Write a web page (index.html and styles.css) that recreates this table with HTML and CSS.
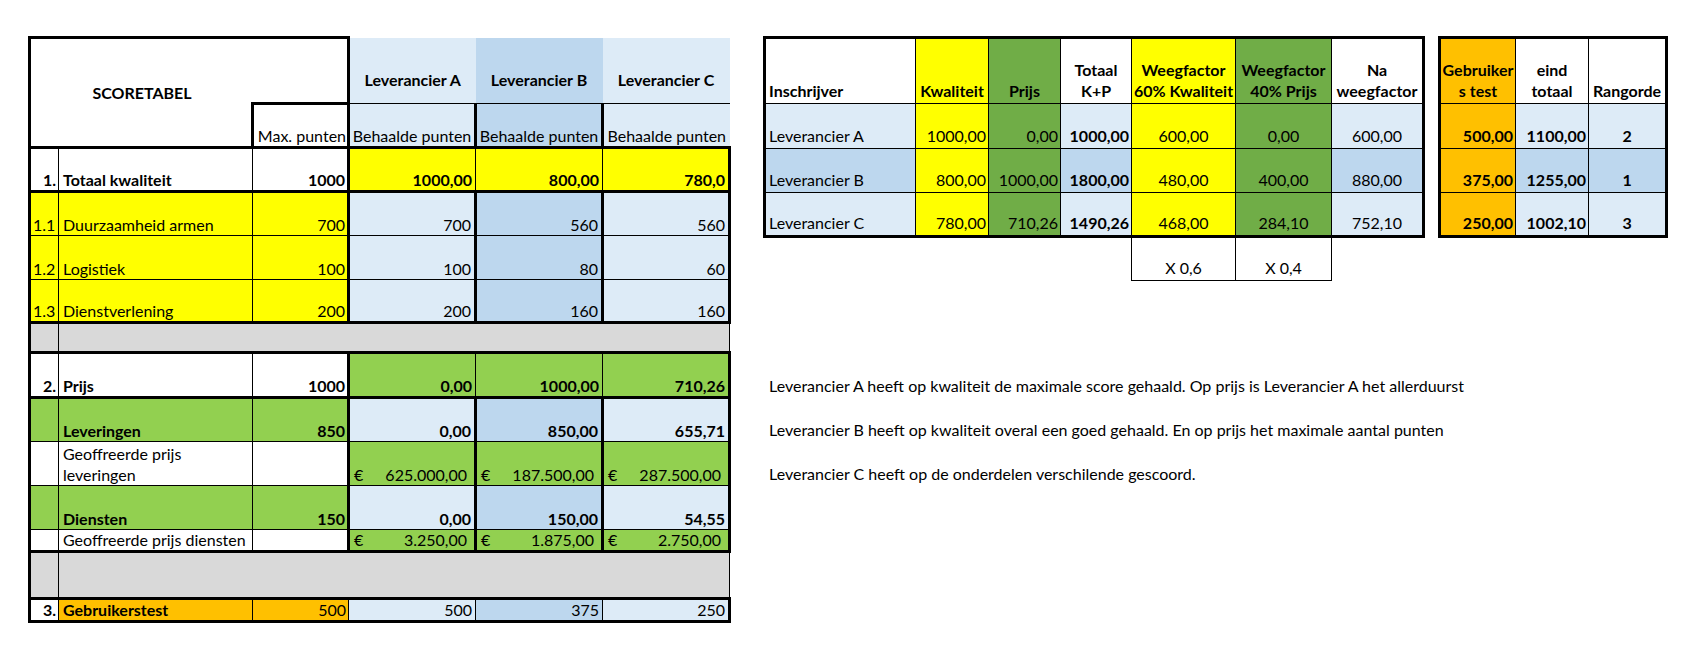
FILE: index.html
```html
<!DOCTYPE html>
<html lang="nl">
<head>
<meta charset="utf-8">
<title>Scoretabel</title>
<link rel="stylesheet" href="styles.css">
</head>
<body>
<div class="page">
  <table class="score">
    <colgroup>
      <col class="w-nr"><col class="w-label"><col class="w-max"><col class="w-lev"><col class="w-lev"><col class="w-lev">
    </colgroup>
    <tr class="h1">
      <td class="title" colspan="2" rowspan="2">SCORETABEL</td>
      <td class="m"></td>
      <td class="a">Leverancier A</td>
      <td class="b">Leverancier B</td>
      <td class="c">Leverancier C</td>
    </tr>
    <tr class="h2">
      <td class="m">Max. punten</td>
      <td class="a">Behaalde punten</td>
      <td class="b">Behaalde punten</td>
      <td class="c">Behaalde punten</td>
    </tr>
    <tr class="tot kw r44">
      <td class="n">1.</td>
      <td class="l">Totaal kwaliteit</td>
      <td class="m">1000</td>
      <td class="a">1000,00</td>
      <td class="b">800,00</td>
      <td class="c">780,0</td>
    </tr>
    <tr class="sub r44">
      <td class="n">1.1</td>
      <td class="l">Duurzaamheid armen</td>
      <td class="m">700</td>
      <td class="a">700</td>
      <td class="b">560</td>
      <td class="c">560</td>
    </tr>
    <tr class="sub r44">
      <td class="n">1.2</td>
      <td class="l">Logistiek</td>
      <td class="m">100</td>
      <td class="a">100</td>
      <td class="b">80</td>
      <td class="c">60</td>
    </tr>
    <tr class="sub last r43">
      <td class="n">1.3</td>
      <td class="l">Dienstverlening</td>
      <td class="m">200</td>
      <td class="a">200</td>
      <td class="b">160</td>
      <td class="c">160</td>
    </tr>
    <tr class="gap r30">
      <td class="n"></td>
      <td class="span" colspan="5"></td>
    </tr>
    <tr class="tot pr r45">
      <td class="n">2.</td>
      <td class="l">Prijs</td>
      <td class="m">1000</td>
      <td class="a">0,00</td>
      <td class="b">1000,00</td>
      <td class="c">710,26</td>
    </tr>
    <tr class="grp r44">
      <td class="n"></td>
      <td class="l">Leveringen</td>
      <td class="m">850</td>
      <td class="a">0,00</td>
      <td class="b">850,00</td>
      <td class="c">655,71</td>
    </tr>
    <tr class="off r44">
      <td class="n"></td>
      <td class="l wrap">Geoffreerde prijs<br>leveringen</td>
      <td class="m"></td>
      <td class="a"><span class="cur">€</span>625.000,00</td>
      <td class="b"><span class="cur">€</span>187.500,00</td>
      <td class="c"><span class="cur">€</span>287.500,00</td>
    </tr>
    <tr class="grp r44">
      <td class="n"></td>
      <td class="l">Diensten</td>
      <td class="m">150</td>
      <td class="a">0,00</td>
      <td class="b">150,00</td>
      <td class="c">54,55</td>
    </tr>
    <tr class="off last r22">
      <td class="n"></td>
      <td class="l">Geoffreerde prijs diensten</td>
      <td class="m"></td>
      <td class="a"><span class="cur">€</span>3.250,00</td>
      <td class="b"><span class="cur">€</span>1.875,00</td>
      <td class="c"><span class="cur">€</span>2.750,00</td>
    </tr>
    <tr class="gap r47">
      <td class="n"></td>
      <td class="span" colspan="5"></td>
    </tr>
    <tr class="geb r23">
      <td class="n">3.</td>
      <td class="l">Gebruikerstest</td>
      <td class="m">500</td>
      <td class="a">500</td>
      <td class="b">375</td>
      <td class="c">250</td>
    </tr>
  </table>

  <div class="right">
    <div class="tables">
      <table class="weeg">
        <colgroup>
          <col class="w-ins"><col class="w-kw"><col class="w-pr"><col class="w-tot"><col class="w-w6"><col class="w-w4"><col class="w-na">
        </colgroup>
        <tr class="hd">
          <td class="ins">Inschrijver</td>
          <td class="kw">Kwaliteit</td>
          <td class="pr">Prijs</td>
          <td class="tot">Totaal<br>K+P</td>
          <td class="w6">Weegfactor<br>60% Kwaliteit</td>
          <td class="w4">Weegfactor<br>40% Prijs</td>
          <td class="na">Na<br>weegfactor</td>
        </tr>
        <tr class="row light r45">
          <td class="ins">Leverancier A</td>
          <td class="kw">1000,00</td>
          <td class="pr">0,00</td>
          <td class="tot">1000,00</td>
          <td class="w6">600,00</td>
          <td class="w4">0,00</td>
          <td class="na">600,00</td>
        </tr>
        <tr class="row mid r44">
          <td class="ins">Leverancier B</td>
          <td class="kw">800,00</td>
          <td class="pr">1000,00</td>
          <td class="tot">1800,00</td>
          <td class="w6">480,00</td>
          <td class="w4">400,00</td>
          <td class="na">880,00</td>
        </tr>
        <tr class="row light last r44">
          <td class="ins">Leverancier C</td>
          <td class="kw">780,00</td>
          <td class="pr">710,26</td>
          <td class="tot">1490,26</td>
          <td class="w6">468,00</td>
          <td class="w4">284,10</td>
          <td class="na">752,10</td>
        </tr>
        <tr class="factor r44">
          <td></td><td></td><td></td><td></td>
          <td class="w6">X 0,6</td>
          <td class="w4">X 0,4</td>
          <td></td>
        </tr>
      </table>

      <table class="eind">
        <colgroup>
          <col class="w-gb"><col class="w-et"><col class="w-rg">
        </colgroup>
        <tr class="hd">
          <td class="gb">Gebruiker<br>s test</td>
          <td class="et">eind<br>totaal</td>
          <td class="rg">Rangorde</td>
        </tr>
        <tr class="row light r45">
          <td class="gb">500,00</td>
          <td class="et">1100,00</td>
          <td class="rg">2</td>
        </tr>
        <tr class="row mid r44">
          <td class="gb">375,00</td>
          <td class="et">1255,00</td>
          <td class="rg">1</td>
        </tr>
        <tr class="row light last r44">
          <td class="gb">250,00</td>
          <td class="et">1002,10</td>
          <td class="rg">3</td>
        </tr>
      </table>
    </div>

    <div class="notes">
      <p class="note n1">Leverancier A heeft op kwaliteit de maximale score gehaald. Op prijs is Leverancier A het allerduurst</p>
      <p class="note">Leverancier B heeft op kwaliteit overal een goed gehaald. En op prijs het maximale aantal punten</p>
      <p class="note">Leverancier C heeft op de onderdelen verschilende gescoord.</p>
    </div>
  </div>
</div>
</body>
</html>
```

FILE: styles.css
```css
:root {
  --thick: 3px solid #000;
  --thin: 1px solid #000;
  --yellow: #ffff00;
  --lblue: #ddebf7;
  --mblue: #bdd7ee;
  --lgreen: #92d050;
  --dgreen: #70ad47;
  --orange: #ffc000;
  --gray: #d9d9d9;
}

body {
  margin: 0;
  background: #fff;
  color: #000;
  font-family: Lato, "Liberation Sans", sans-serif;
  font-size: 16px;
}

.page {
  display: flex;
  align-items: flex-start;
  gap: 32px;
  padding: 36px 0 0 28px;
}

table {
  border-collapse: collapse;
  table-layout: fixed;
}

td {
  padding: 0 3px 1px;
  vertical-align: bottom;
  white-space: nowrap;
  line-height: 19px;
}

/* row heights */
.h1 { height: 66px; }
.h2 { height: 44px; }
.r22 { height: 22px; }
.r23 { height: 23px; }
.r30 { height: 30px; }
.r43 { height: 43px; }
.r44 { height: 44px; }
.r45 { height: 45px; }
.r47 { height: 47px; }

/* ---------- score table ---------- */
.score { width: 702px; }
.w-nr { width: 29px; }
.w-label { width: 194px; }
.w-max { width: 96px; }
.w-lev { width: 127px; }

.score .n { text-align: right; border-left: var(--thick); border-right: var(--thin); padding-right: 2px; }
.score .l { text-align: left; padding-left: 4px; border-right: var(--thin); }
.score .m { text-align: right; padding-right: 2px; }
.score .a, .score .b, .score .c { text-align: right; padding-right: 3px; }
.score .a, .score .c { background: var(--lblue); }
.score .b { background: var(--mblue); }

/* header */
.score .title {
  border-top: var(--thick);
  border-left: var(--thick);
  border-bottom: var(--thick);
  text-align: center;
  vertical-align: middle;
  font-weight: bold;
  padding: 0 0 0 2px;
}
.h1 .m { border-top: var(--thick); border-bottom: var(--thick); border-right: var(--thick); }
.h1 .a, .h1 .b, .h1 .c {
  text-align: center;
  font-weight: bold;
  padding: 0 0 14px;
}
.h2 .m {
  border-left: var(--thick);
  border-right: var(--thick);
  border-bottom: var(--thick);
  padding: 0 1px 1px 0;
  text-align: right;
}
.h2 .a, .h2 .b, .h2 .c {
  text-align: center;
  padding: 0 0 1px;
  border-top: var(--thin);
  border-bottom: var(--thick);
}
.h2 .a, .h2 .b { border-right: var(--thick); }

/* total rows */
.tot td { border-top: var(--thick); border-bottom: var(--thick); font-weight: bold; }
.tot .m { border-right: var(--thick); }
.tot .a, .tot .b { border-right: var(--thin); }
.tot .c { border-right: var(--thick); }
.kw .a, .kw .b, .kw .c { background: var(--yellow); }
.pr .a, .pr .b, .pr .c { background: var(--lgreen); }

/* quality sub rows */
.sub td { border-bottom: var(--thin); }
.sub .n { text-align: left; padding-left: 2px; }
.sub .n, .sub .l, .sub .m { background: var(--yellow); }
.sub .m, .sub .a, .sub .b, .sub .c { border-right: var(--thick); }
.sub.last td { border-bottom: var(--thick); }

/* gray spacer rows */
.gap td { background: var(--gray); border-top: var(--thick); border-bottom: var(--thick); }
.gap .span { border-right: var(--thin); }

/* price groups */
.grp td { border-bottom: var(--thin); font-weight: bold; }
.grp .n, .grp .l, .grp .m { background: var(--lgreen); }
.grp .m, .grp .a, .grp .b, .grp .c { border-right: var(--thick); }

.off td { border-bottom: var(--thin); }
.off .a, .off .b, .off .c {
  background: var(--lgreen);
  border-right: var(--thick);
  padding-right: 7px;
}
.off .m { border-right: var(--thick); }
.off.last td { border-bottom: var(--thick); }
.score .wrap { white-space: normal; line-height: 21px; padding-bottom: 0; }
.cur { float: left; padding-left: 1px; }

/* user test */
.geb td { border-bottom: var(--thick); }
.geb .n, .geb .l { font-weight: bold; }
.geb .l, .geb .m { background: var(--orange); }
.geb .m, .geb .a, .geb .b { border-right: var(--thin); }
.geb .c { border-right: var(--thick); }

/* ---------- weighting tables ---------- */
.right { display: flex; flex-direction: column; }
.tables { display: flex; align-items: flex-start; gap: 13px; }

.w-ins { width: 151px; }
.w-kw { width: 73px; }
.w-pr { width: 72px; }
.w-tot { width: 71px; }
.w-w6 { width: 104px; }
.w-w4 { width: 96px; }
.w-na { width: 92px; }
.weeg { width: 659px; }

.w-gb { width: 76px; }
.w-et { width: 73px; }
.w-rg { width: 78px; }
.eind { width: 227px; }

.hd { height: 66px; }
.hd td {
  border-top: var(--thick);
  border-bottom: var(--thin);
  border-right: var(--thin);
  font-weight: bold;
  text-align: center;
  line-height: 21px;
  padding: 0 1px 2px;
}
.hd .ins { text-align: left; padding-left: 3px; }
.weeg .ins, .eind .gb { border-left: var(--thick); }
.weeg .na, .eind .rg { border-right: var(--thick); }

.row td { border-bottom: var(--thin); border-right: var(--thin); padding: 0 2px 3px; }
.row .ins { padding-left: 3px; }
.row.last td { border-bottom: var(--thick); }
.row.light .ins, .row.light .tot, .row.light .na, .row.light .et, .row.light .rg { background: var(--lblue); }
.row.mid .ins, .row.mid .tot, .row.mid .na, .row.mid .et, .row.mid .rg { background: var(--mblue); }

.weeg .kw, .weeg .w6 { background: var(--yellow); }
.weeg .pr, .weeg .w4 { background: var(--dgreen); }
.eind .gb { background: var(--orange); }

.row .kw, .row .pr, .row .tot, .row .gb, .row .et { text-align: right; }
.row .w6, .row .w4, .row .na, .row .rg { text-align: center; }
.row .tot, .row .gb, .row .et, .row .rg { font-weight: bold; }

.factor td { background: #fff; padding: 0 3px 3px; }
.factor .w6, .factor .w4 {
  background: #fff;
  text-align: center;
  border-right: var(--thin);
  border-bottom: var(--thin);
}
.factor .w6 { border-left: var(--thin); }

/* notes */
.notes { margin-top: 71px; }
.note {
  margin: 0;
  height: 44px;
  box-sizing: border-box;
  display: flex;
  align-items: flex-end;
  padding: 0 0 2px 6px;
  line-height: 19px;
}
.note.n1 { height: 45px; }
```
